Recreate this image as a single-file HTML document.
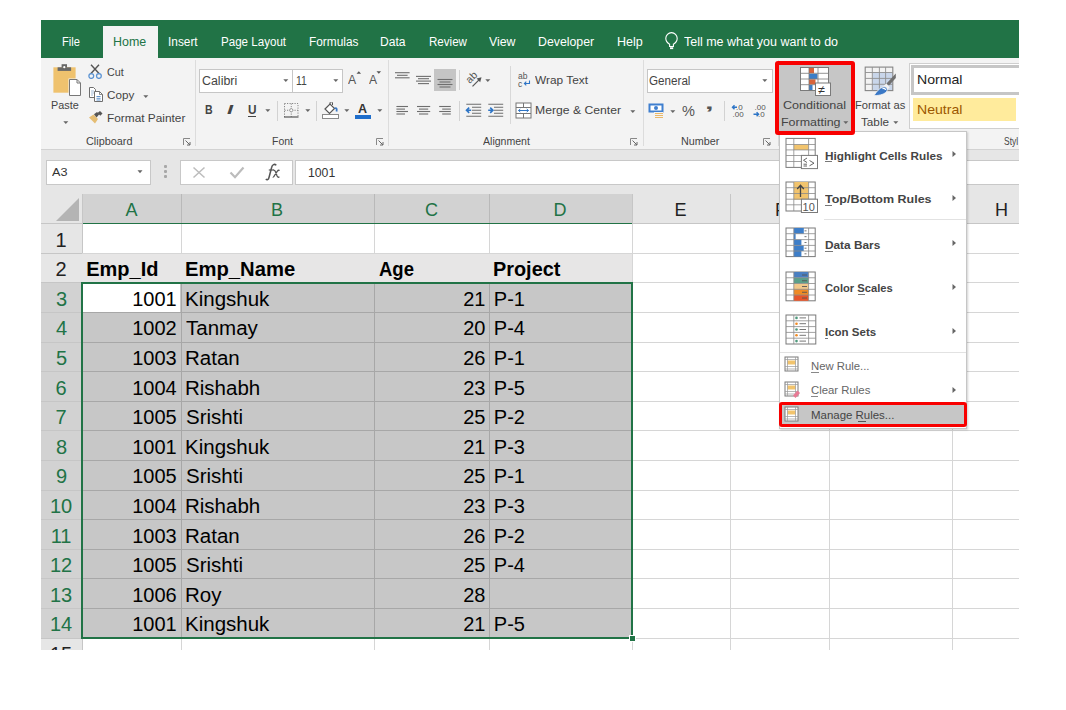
<!DOCTYPE html>
<html><head><meta charset="utf-8"><style>
html,body{margin:0;padding:0;}
body{width:1066px;height:710px;background:#fff;position:relative;overflow:hidden;font-family:"Liberation Sans",sans-serif;}
body>div,body>svg{position:absolute;}
.t{white-space:nowrap;transform-origin:0 0;}
</style></head><body>
<div style="left:41px;top:20px;width:978px;height:38px;background:#217346"></div>
<div style="left:41px;top:58px;width:978px;height:91px;background:#f3f3f3"></div>
<div style="left:41px;top:149px;width:978px;height:1px;background:#d2d2d2"></div>
<div style="left:41px;top:150px;width:978px;height:44px;background:#e6e6e6"></div>
<div style="left:103px;top:26px;width:55px;height:32px;background:#f3f3f3"></div>
<div style="left:82px;top:224px;width:937px;height:426px;background:#fff"></div>
<div style="left:82px;top:194px;width:937px;height:30px;background:#e6e6e6"></div>
<div style="left:41px;top:194px;width:41px;height:456px;background:#e6e6e6"></div>
<div style="left:41px;top:283.3px;width:41px;height:355.2px;background:#d2d2d2"></div>
<div style="left:82px;top:194px;width:550px;height:29px;background:#d2d2d2"></div>
<div style="left:82px;top:223px;width:937px;height:1px;background:#c6c6c6"></div>
<div style="left:82px;top:223px;width:550px;height:1px;background:#217346"></div>
<div style="left:41px;top:223px;width:41px;height:1px;background:#c6c6c6"></div>
<div style="left:181px;top:194px;width:1px;height:29px;background:#b9b9b9"></div>
<div style="left:374px;top:194px;width:1px;height:29px;background:#b9b9b9"></div>
<div style="left:489px;top:194px;width:1px;height:29px;background:#b9b9b9"></div>
<div style="left:632px;top:194px;width:1px;height:29px;background:#c6c6c6"></div>
<div style="left:730px;top:194px;width:1px;height:29px;background:#c6c6c6"></div>
<div style="left:829px;top:194px;width:1px;height:29px;background:#c6c6c6"></div>
<div style="left:952px;top:194px;width:1px;height:29px;background:#c6c6c6"></div>
<div style="left:82px;top:194px;width:1px;height:456px;background:#c6c6c6"></div>
<div style="left:82px;top:252.7px;width:937px;height:1px;background:#d6d6d6"></div>
<div style="left:82px;top:282.3px;width:937px;height:1px;background:#d6d6d6"></div>
<div style="left:82px;top:311.9px;width:937px;height:1px;background:#d6d6d6"></div>
<div style="left:82px;top:341.5px;width:937px;height:1px;background:#d6d6d6"></div>
<div style="left:82px;top:371.1px;width:937px;height:1px;background:#d6d6d6"></div>
<div style="left:82px;top:400.70000000000005px;width:937px;height:1px;background:#d6d6d6"></div>
<div style="left:82px;top:430.3px;width:937px;height:1px;background:#d6d6d6"></div>
<div style="left:82px;top:459.9px;width:937px;height:1px;background:#d6d6d6"></div>
<div style="left:82px;top:489.5px;width:937px;height:1px;background:#d6d6d6"></div>
<div style="left:82px;top:519.1px;width:937px;height:1px;background:#d6d6d6"></div>
<div style="left:82px;top:548.7px;width:937px;height:1px;background:#d6d6d6"></div>
<div style="left:82px;top:578.3000000000001px;width:937px;height:1px;background:#d6d6d6"></div>
<div style="left:82px;top:607.9px;width:937px;height:1px;background:#d6d6d6"></div>
<div style="left:82px;top:637.5px;width:937px;height:1px;background:#d6d6d6"></div>
<div style="left:181px;top:224px;width:1px;height:426px;background:#d6d6d6"></div>
<div style="left:374px;top:224px;width:1px;height:426px;background:#d6d6d6"></div>
<div style="left:489px;top:224px;width:1px;height:426px;background:#d6d6d6"></div>
<div style="left:632px;top:224px;width:1px;height:426px;background:#d6d6d6"></div>
<div style="left:730px;top:224px;width:1px;height:426px;background:#d6d6d6"></div>
<div style="left:829px;top:224px;width:1px;height:426px;background:#d6d6d6"></div>
<div style="left:952px;top:224px;width:1px;height:426px;background:#d6d6d6"></div>
<div style="left:82px;top:253.7px;width:550px;height:29.100000000000023px;background:#e7e6e6"></div>
<div style="left:41px;top:252.7px;width:41px;height:1px;background:#c6c6c6"></div>
<div style="left:41px;top:282.3px;width:41px;height:1px;background:#c6c6c6"></div>
<div style="left:41px;top:311.9px;width:41px;height:1px;background:#c6c6c6"></div>
<div style="left:41px;top:341.5px;width:41px;height:1px;background:#c6c6c6"></div>
<div style="left:41px;top:371.1px;width:41px;height:1px;background:#c6c6c6"></div>
<div style="left:41px;top:400.70000000000005px;width:41px;height:1px;background:#c6c6c6"></div>
<div style="left:41px;top:430.3px;width:41px;height:1px;background:#c6c6c6"></div>
<div style="left:41px;top:459.9px;width:41px;height:1px;background:#c6c6c6"></div>
<div style="left:41px;top:489.5px;width:41px;height:1px;background:#c6c6c6"></div>
<div style="left:41px;top:519.1px;width:41px;height:1px;background:#c6c6c6"></div>
<div style="left:41px;top:548.7px;width:41px;height:1px;background:#c6c6c6"></div>
<div style="left:41px;top:578.3000000000001px;width:41px;height:1px;background:#c6c6c6"></div>
<div style="left:41px;top:607.9px;width:41px;height:1px;background:#c6c6c6"></div>
<div style="left:41px;top:637.5px;width:41px;height:1px;background:#c6c6c6"></div>
<div style="left:82px;top:282.8px;width:550px;height:355.2px;background:rgba(0,0,0,0.22)"></div>
<div style="left:83px;top:283.8px;width:97px;height:28.099999999999966px;background:#fff"></div>
<div style="left:81px;top:281.8px;width:548px;height:353.6px;border:2px solid #217346"></div>
<div style="left:629px;top:634.8px;width:5px;height:5px;background:#217346;border:1px solid #fff"></div>
<svg style="left:55px;top:198px" width="25" height="24"><polygon points="24,0 24,23 1,23" fill="#b4b4b4"/></svg>
<div style="left:46px;top:160px;width:103px;height:23px;background:#fff;border:1px solid #c8c8c8"></div>
<svg style="left:137px;top:170px;" width="6" height="4" viewBox="0 0 6 4"><polygon points="0.5,0.3 5.5,0.3 3,3.3" fill="#666"/></svg>
<div style="left:164px;top:165.3px;width:2.5px;height:2.5px;background:#a8a8a8;border-radius:1px"></div>
<div style="left:164px;top:170.2px;width:2.5px;height:2.5px;background:#a8a8a8;border-radius:1px"></div>
<div style="left:164px;top:175px;width:2.5px;height:2.5px;background:#a8a8a8;border-radius:1px"></div>
<div style="left:180px;top:160px;width:111px;height:23px;background:#fff;border:1px solid #c8c8c8"></div>
<svg style="left:192px;top:166px;" width="14" height="13" viewBox="0 0 14 13"><path d="M1.5,1.5 L12.5,11.5 M12.5,1.5 L1.5,11.5" stroke="#bcbcbc" stroke-width="1.5" fill="none"/></svg>
<svg style="left:229px;top:166px;" width="16" height="13" viewBox="0 0 16 13"><path d="M1.5,6.5 L6,11.2 L14.5,1.5" stroke="#bcbcbc" stroke-width="2.2" fill="none"/></svg>
<svg style="left:264px;top:162px;" width="18" height="20" viewBox="0 0 18 20"><path d="M12.3,3.2 C10.5,1.6 8.3,2.4 7.6,5.5 L5,15.5 C4.4,17.8 3,18.2 1.8,17.2" stroke="#555" stroke-width="1.5" fill="none"/><path d="M4.8,8 H10" stroke="#555" stroke-width="1.2"/><path d="M9.6,8.2 C10.8,8 11.3,9 11.8,10.5 L13,13.8 C13.6,15.3 14.3,15.6 15.4,14.8 M15.6,8.6 C14.8,8 14,8.3 13.2,9.3 L10.5,13.5 C9.8,14.8 9.2,15.3 8.8,15" stroke="#555" stroke-width="1.3" fill="none"/></svg>
<div style="left:295px;top:160px;width:730px;height:23px;background:#fff;border:1px solid #c8c8c8"></div>
<div style="left:195px;top:60px;width:1px;height:86px;background:#dcdcdc"></div>
<div style="left:388px;top:60px;width:1px;height:86px;background:#dcdcdc"></div>
<div style="left:642.5px;top:60px;width:1px;height:86px;background:#dcdcdc"></div>
<svg style="left:183px;top:137.5px;" width="8" height="8" viewBox="0 0 8 8"><path d="M0.5,7 V0.5 H7" stroke="#888" stroke-width="1" fill="none"/><path d="M2.5,2.5 L7,7 M7,4 V7 H4" stroke="#666" stroke-width="1" fill="none"/></svg>
<svg style="left:376px;top:137.5px;" width="8" height="8" viewBox="0 0 8 8"><path d="M0.5,7 V0.5 H7" stroke="#888" stroke-width="1" fill="none"/><path d="M2.5,2.5 L7,7 M7,4 V7 H4" stroke="#666" stroke-width="1" fill="none"/></svg>
<svg style="left:630px;top:137.5px;" width="8" height="8" viewBox="0 0 8 8"><path d="M0.5,7 V0.5 H7" stroke="#888" stroke-width="1" fill="none"/><path d="M2.5,2.5 L7,7 M7,4 V7 H4" stroke="#666" stroke-width="1" fill="none"/></svg>
<svg style="left:763px;top:137.5px;" width="8" height="8" viewBox="0 0 8 8"><path d="M0.5,7 V0.5 H7" stroke="#888" stroke-width="1" fill="none"/><path d="M2.5,2.5 L7,7 M7,4 V7 H4" stroke="#666" stroke-width="1" fill="none"/></svg>
<svg style="left:52px;top:63px;" width="31" height="34" viewBox="0 0 31 34"><rect x="1.4" y="4.3" width="22.2" height="25.4" fill="#efc26e"/>
<rect x="5.6" y="4.3" width="13.5" height="3.6" fill="#686868"/><rect x="9.6" y="1.2" width="5.4" height="3.4" fill="#686868"/>
<circle cx="12.3" cy="4.2" r="1.1" fill="#fff"/>
<path d="M16.5,15.5 H25.5 L30,20 V33.5 H16.5 Z" fill="#f3f3f3"/>
<path d="M17.5,16.5 H25 L28.5,20 V32.5 H17.5 Z" fill="#fff" stroke="#777" stroke-width="1"/>
<path d="M25,16.5 V20 H28.5" fill="none" stroke="#777" stroke-width="1"/></svg>
<svg style="left:62.5px;top:120.5px;" width="6" height="4" viewBox="0 0 6 4"><polygon points="0.3,0.2 5.3,0.2 2.8,3" fill="#666"/></svg>
<svg style="left:88px;top:64px;" width="15" height="15" viewBox="0 0 15 15"><path d="M3,0.8 L11.5,10 M11,0.8 L2.5,10" stroke="#555" stroke-width="1.4" fill="none"/>
<circle cx="3.3" cy="12" r="2.4" fill="none" stroke="#5b93d3" stroke-width="1.3"/><circle cx="10.9" cy="12" r="2.4" fill="none" stroke="#5b93d3" stroke-width="1.3"/></svg>
<svg style="left:88px;top:86px;" width="16" height="17" viewBox="0 0 16 17"><path d="M1.5,1.5 H5.5 L7.5,3.5 V11.5 H1.5 Z" fill="#fff" stroke="#6e6e6e" stroke-width="1"/>
<path d="M3,5 H6 M3,7 H6 M3,9 H5" stroke="#8aa9cc" stroke-width="0.8"/>
<path d="M6.5,5.5 H11.5 L14.5,8.5 V15.5 H6.5 Z" fill="#fff" stroke="#6e6e6e" stroke-width="1"/>
<path d="M11.5,5.5 V8.5 H14.5" fill="none" stroke="#6e6e6e" stroke-width="0.8"/>
<path d="M8.5,10.5 H12.5 M8.5,12.3 H12.5 M8.5,14 H12.5" stroke="#4f88c8" stroke-width="0.9"/></svg>
<svg style="left:143.3px;top:94.5px;" width="6" height="4" viewBox="0 0 6 4"><polygon points="0.3,0.2 5.3,0.2 2.8,3" fill="#666"/></svg>
<svg style="left:88px;top:111px;" width="16" height="14" viewBox="0 0 16 14"><path d="M1,6.5 L5.5,3.5 L10,8 L7,12.5 Z" fill="#e5bd73"/>
<path d="M6,3.2 L9,1 L11.3,3.3 L8.5,6.5 Z" fill="#555"/><path d="M9.5,2 L12,0 L14.5,2.5 L12.3,4.7 Z" fill="#555"/></svg>
<div style="left:198.5px;top:68.5px;width:93px;height:22px;background:#fff;border:1px solid #c6c6c6"></div>
<div style="left:292px;top:68.5px;width:49px;height:22px;background:#fff;border:1px solid #c6c6c6"></div>
<svg style="left:283px;top:79px;" width="6" height="4" viewBox="0 0 6 4"><polygon points="0.3,0.2 5.3,0.2 2.8,3" fill="#666"/></svg>
<svg style="left:332.5px;top:79px;" width="6" height="4" viewBox="0 0 6 4"><polygon points="0.3,0.2 5.3,0.2 2.8,3" fill="#666"/></svg>
<svg style="left:355.5px;top:71px;" width="6" height="3" viewBox="0 0 6 3"><polygon points="0.5,2.8 2.8,0.3 5.1,2.8" fill="#555"/></svg>
<svg style="left:376px;top:71px;" width="6" height="3" viewBox="0 0 6 3"><polygon points="0.5,0.3 5.1,0.3 2.8,2.8" fill="#555"/></svg>
<div style="left:247.5px;top:115.8px;width:8.5px;height:1.3px;background:#444"></div>
<svg style="left:265px;top:109.3px;" width="6" height="4" viewBox="0 0 6 4"><polygon points="0.3,0.2 5.3,0.2 2.8,3" fill="#666"/></svg>
<div style="left:277px;top:100.5px;width:1px;height:20px;background:#d2d2d2"></div>
<svg style="left:284px;top:102.5px;" width="15" height="15" viewBox="0 0 15 15"><path d="M0.5,0.5 H14 V14 M0.5,0.5 V14 M7.25,0.5 V14 M0.5,7.25 H14" stroke="#888" stroke-width="1" stroke-dasharray="1.2,1.3" fill="none"/><circle cx="7.25" cy="7.25" r="1.6" fill="#fff" stroke="#888" stroke-width="0.8"/>
<path d="M0,14 H14.5" stroke="#555" stroke-width="1.2"/></svg>
<svg style="left:304.5px;top:109.3px;" width="6" height="4" viewBox="0 0 6 4"><polygon points="0.3,0.2 5.3,0.2 2.8,3" fill="#666"/></svg>
<div style="left:316px;top:100.5px;width:1px;height:20px;background:#d2d2d2"></div>
<svg style="left:322px;top:102px;" width="18" height="17" viewBox="0 0 18 17"><rect x="0.5" y="12.5" width="16" height="4" fill="#fff" stroke="#8a8a8a" stroke-width="1"/>
<path d="M3,7 L8,2 L12.5,6.5 L7.5,11.5 Z" fill="#fff" stroke="#555" stroke-width="1.2"/>
<path d="M8,2 V0.8 A1.3,1.3 0 0 1 10.5,0.8 V3" fill="none" stroke="#555" stroke-width="1"/>
<path d="M12.5,6.5 Q15.5,5 14.5,9.5" fill="none" stroke="#3a78c4" stroke-width="1.8"/></svg>
<svg style="left:344px;top:109.3px;" width="6" height="4" viewBox="0 0 6 4"><polygon points="0.3,0.2 5.3,0.2 2.8,3" fill="#666"/></svg>
<div style="left:354.8px;top:114.6px;width:16.2px;height:4px;background:#1f6ecb"></div>
<svg style="left:376.5px;top:109.3px;" width="6" height="4" viewBox="0 0 6 4"><polygon points="0.3,0.2 5.3,0.2 2.8,3" fill="#666"/></svg>
<svg style="left:394px;top:70px;" width="26" height="22" viewBox="0 0 26 22"><path d="M1,2.7 H15.6" stroke="#6e6e6e" stroke-width="1.1"/><path d="M3,5.3 H13.6" stroke="#6e6e6e" stroke-width="1.1"/><path d="M1,7.8 H15.6" stroke="#6e6e6e" stroke-width="1.1"/></svg>
<svg style="left:415px;top:72px;" width="26" height="22" viewBox="0 0 26 22"><path d="M1,4.4 H16" stroke="#6e6e6e" stroke-width="1.1"/><path d="M3,6.7 H14" stroke="#6e6e6e" stroke-width="1.1"/><path d="M1,9.1 H16" stroke="#6e6e6e" stroke-width="1.1"/><path d="M3,11.6 H14" stroke="#6e6e6e" stroke-width="1.1"/></svg>
<div style="left:434px;top:69px;width:22px;height:22px;background:#c5c5c5"></div>
<svg style="left:436px;top:72px;" width="26" height="22" viewBox="0 0 26 22"><path d="M1.5,7.5 H16.5" stroke="#6e6e6e" stroke-width="1.1"/><path d="M3.5,10 H14.5" stroke="#6e6e6e" stroke-width="1.1"/><path d="M1.5,12.5 H16.5" stroke="#6e6e6e" stroke-width="1.1"/><path d="M3.5,15 H14.5" stroke="#6e6e6e" stroke-width="1.1"/></svg>
<div style="left:459px;top:70px;width:1px;height:20px;background:#d2d2d2"></div>
<svg style="left:465px;top:71px;" width="18" height="18" viewBox="0 0 18 18"><text x="4.8" y="13" font-family="Liberation Sans" font-size="10.5" fill="#555" transform="rotate(-45 4.8 13)">ab</text>
<path d="M7.5,15.3 L14.5,8.3" stroke="#555" stroke-width="1.2" fill="none"/><polygon points="16.5,6.3 11.6,7.6 15.2,11.2" fill="#555"/></svg>
<svg style="left:485px;top:78.5px;" width="6" height="4" viewBox="0 0 6 4"><polygon points="0.3,0.2 5.3,0.2 2.8,3" fill="#666"/></svg>
<svg style="left:395px;top:104px;" width="26" height="22" viewBox="0 0 26 22"><path d="M1.4,2.5 H13" stroke="#6e6e6e" stroke-width="1.1"/><path d="M1.4,5.1 H10" stroke="#6e6e6e" stroke-width="1.1"/><path d="M1.4,7.5 H13" stroke="#6e6e6e" stroke-width="1.1"/><path d="M1.4,10 H10" stroke="#6e6e6e" stroke-width="1.1"/></svg>
<svg style="left:415px;top:104px;" width="26" height="22" viewBox="0 0 26 22"><path d="M2,2.5 H15.2" stroke="#6e6e6e" stroke-width="1.1"/><path d="M4,5.1 H13.2" stroke="#6e6e6e" stroke-width="1.1"/><path d="M2,7.5 H15.2" stroke="#6e6e6e" stroke-width="1.1"/><path d="M4,10 H13.2" stroke="#6e6e6e" stroke-width="1.1"/></svg>
<svg style="left:437px;top:104px;" width="26" height="22" viewBox="0 0 26 22"><path d="M2.2,2.5 H13.8" stroke="#6e6e6e" stroke-width="1.1"/><path d="M5.2,5.1 H13.8" stroke="#6e6e6e" stroke-width="1.1"/><path d="M2.2,7.5 H13.8" stroke="#6e6e6e" stroke-width="1.1"/><path d="M5.2,10 H13.8" stroke="#6e6e6e" stroke-width="1.1"/></svg>
<div style="left:459px;top:100.5px;width:1px;height:20px;background:#d2d2d2"></div>
<svg style="left:465px;top:103px;" width="18" height="15" viewBox="0 0 18 15"><path d="M1.3,1.2 H16.2 M7,4.2 H16.2 M7,7.2 H16.2 M7,10.2 H16.2 M1.3,13.3 H16.2" stroke="#6e6e6e" stroke-width="1.1"/>
<path d="M1.5,7.2 H6.2 M4.2,4.6 L1.5,7.2 L4.2,9.8" stroke="#2e75c6" stroke-width="1.6" fill="none"/></svg>
<svg style="left:486.5px;top:103px;" width="18" height="15" viewBox="0 0 18 15"><path d="M1.3,1.2 H16.2 M7,4.2 H16.2 M7,7.2 H16.2 M7,10.2 H16.2 M1.3,13.3 H16.2" stroke="#6e6e6e" stroke-width="1.1"/>
<path d="M1.2,7.2 H5.8 M3.2,4.6 L5.9,7.2 L3.2,9.8" stroke="#2e75c6" stroke-width="1.6" fill="none"/></svg>
<div style="left:509.5px;top:66px;width:1px;height:58px;background:#d8d8d8"></div>
<svg style="left:517px;top:71px;" width="14" height="17" viewBox="0 0 14 17"><text x="1" y="8" font-family="Liberation Sans" font-size="8.5" fill="#555">ab</text>
<text x="1" y="15.5" font-family="Liberation Sans" font-size="8.5" fill="#555">c</text>
<path d="M12.5,9.5 V12.5 H7.5 M9.3,10.7 L7.4,12.5 L9.3,14.3" stroke="#2e75c6" stroke-width="1.1" fill="none"/></svg>
<svg style="left:514.5px;top:101.5px;" width="17" height="17" viewBox="0 0 17 17"><rect x="1" y="1" width="15" height="15" fill="#fff" stroke="#777" stroke-width="1"/>
<path d="M1,5.5 H16 M1,11.5 H16 M8.5,1 V5.5 M8.5,11.5 V16" stroke="#777" stroke-width="1"/>
<path d="M3.5,8.5 H13.5 M5.3,7 L3.5,8.5 L5.3,10 M11.7,7 L13.5,8.5 L11.7,10" stroke="#2e75c6" stroke-width="1" fill="none"/></svg>
<svg style="left:629.5px;top:109.8px;" width="6" height="4" viewBox="0 0 6 4"><polygon points="0.3,0.2 5.3,0.2 2.8,3" fill="#666"/></svg>
<div style="left:646.5px;top:68.5px;width:124px;height:22px;background:#fff;border:1px solid #c6c6c6"></div>
<svg style="left:761.5px;top:79px;" width="6" height="4" viewBox="0 0 6 4"><polygon points="0.3,0.2 5.3,0.2 2.8,3" fill="#666"/></svg>
<svg style="left:648px;top:102.5px;" width="17" height="17" viewBox="0 0 17 17"><rect x="0.5" y="0.5" width="15" height="9" fill="#3f7fcf"/><rect x="2.5" y="2.5" width="11" height="5" fill="#fff"/>
<circle cx="8" cy="5" r="2" fill="#3f7fcf"/>
<rect x="6" y="9" width="9" height="7.5" fill="#f3f3f3"/>
<path d="M7,10.5 H15 M7,12.5 H15 M7,14.5 H15" stroke="#e9b86a" stroke-width="1.2"/></svg>
<svg style="left:670px;top:109.6px;" width="6" height="4" viewBox="0 0 6 4"><polygon points="0.3,0.2 5.3,0.2 2.8,3" fill="#666"/></svg>
<div style="left:724px;top:100.5px;width:1px;height:20px;background:#d2d2d2"></div>
<svg style="left:731px;top:103px;" width="16" height="15" viewBox="0 0 16 15"><text x="5" y="7" font-family="Liberation Sans" font-size="8" fill="#555">.0</text><text x="1.5" y="14" font-family="Liberation Sans" font-size="8" fill="#555">.00</text>
<path d="M1.5,4.3 H6 M3.5,2.3 L1.5,4.3 L3.5,6.3" stroke="#2e75c6" stroke-width="1.4" fill="none"/></svg>
<svg style="left:752px;top:103px;" width="16" height="15" viewBox="0 0 16 15"><text x="2.5" y="7" font-family="Liberation Sans" font-size="8" fill="#555">.00</text><text x="6" y="14" font-family="Liberation Sans" font-size="8" fill="#555">.0</text>
<path d="M1.5,11.3 H6.5 M4.6,9.3 L6.6,11.3 L4.6,13.3" stroke="#2e75c6" stroke-width="1.4" fill="none"/></svg>
<div style="left:778px;top:60px;width:1px;height:86px;background:#dcdcdc"></div>
<div style="left:779px;top:65px;width:72px;height:66px;background:#c6c6c6"></div>
<svg style="left:800px;top:67px;" width="32" height="30" viewBox="0 0 32 30"><rect x="0.5" y="0.5" width="28" height="23" fill="#fff" stroke="#7a7a7a" stroke-width="1"/>
<rect x="9" y="1" width="5" height="5.2" fill="#d9643a"/><rect x="9" y="6.8" width="8.5" height="5.2" fill="#3c7ec8"/>
<rect x="9" y="12.3" width="6.5" height="5.2" fill="#d9643a"/><rect x="9" y="18" width="3.5" height="5" fill="#3c7ec8"/>
<path d="M0.5,6.3 H28.5 M0.5,12 H28.5 M0.5,17.7 H28.5 M9,0.5 V23.5 M18,0.5 V23.5" stroke="#7a7a7a" stroke-width="0.8"/>
<rect x="15.5" y="16" width="15" height="12.5" fill="#fff" stroke="#7a7a7a" stroke-width="1"/>
<text x="18.2" y="26.5" font-family="Liberation Sans" font-size="12.5" fill="#333">≠</text></svg>
<svg style="left:843.3px;top:121.2px;" width="6" height="4" viewBox="0 0 6 4"><polygon points="0.3,0.2 5.3,0.2 2.8,3" fill="#666"/></svg>
<svg style="left:864px;top:66px;" width="34" height="32" viewBox="0 0 34 32"><rect x="8.3" y="6.5" width="20.5" height="18.1" fill="#c9d6ea"/>
<rect x="1.2" y="1.1" width="27.6" height="23.5" fill="none" stroke="#858585" stroke-width="1.1"/>
<path d="M1.2,6.5 H28.8 M1.2,12.4 H28.8 M1.2,18.3 H28.8 M8.3,1.1 V24.6 M15.4,1.1 V24.6 M21.6,1.1 V24.6" stroke="#8e8e8e" stroke-width="0.9" fill="none"/>
<path d="M20,23 L24,19.5" stroke="#f3f3f3" stroke-width="5"/>
<path d="M31.8,7.5 L31.8,12 L25,19.5 L22.5,17.5 Z" fill="#707070"/>
<path d="M10,29.6 C12.5,25.5 15.5,22 19,21 C22,20.2 23.8,22.3 23,24.8 C21.5,28 16,29.6 10,29.6 Z" fill="#3a78c6" stroke="#f3f3f3" stroke-width="0.8"/>
<path d="M18.5,22.8 C20,22 21.5,22.6 21.5,24" stroke="#fff" stroke-width="1.2" fill="none"/></svg>
<svg style="left:892.5px;top:121.2px;" width="6" height="4" viewBox="0 0 6 4"><polygon points="0.3,0.2 5.3,0.2 2.8,3" fill="#666"/></svg>
<div style="left:909px;top:63px;width:120px;height:63.5px;background:#fff;border:1px solid #cfcfcf;border-right:none"></div>
<div style="left:910.5px;top:65px;width:110px;height:29.5px;background:#fff;border:3px solid #c6c6c6;box-sizing:border-box;border-right:none"></div>
<div style="left:913px;top:98px;width:103px;height:23px;background:#ffeb9c"></div>
<svg style="left:665px;top:32px;" width="14" height="19" viewBox="0 0 14 19"><path d="M4.6,14.5 V12.2 C1.5,10.5 0.8,8.5 0.8,6.3 A5.7,5.7 0 0 1 12.2,6.3 C12.2,8.5 11.5,10.5 8.4,12.2 V14.5 Z" fill="none" stroke="#fff" stroke-width="1.1"/>
<rect x="5" y="15.3" width="3.2" height="1.8" fill="#fff"/></svg>
<div class="t" style="left:61.70px;top:35.84px;font-size:12px;line-height:12px;color:#fff;transform:scaleX(0.9256);">File</div>
<div class="t" style="left:168.21px;top:35.84px;font-size:12px;line-height:12px;color:#fff;transform:scaleX(0.9873);">Insert</div>
<div class="t" style="left:220.90px;top:35.84px;font-size:12px;line-height:12px;color:#fff;transform:scaleX(0.9654);">Page Layout</div>
<div class="t" style="left:308.60px;top:35.84px;font-size:12px;line-height:12px;color:#fff;transform:scaleX(0.9878);">Formulas</div>
<div class="t" style="left:380.20px;top:35.84px;font-size:12px;line-height:12px;color:#fff;transform:scaleX(1.0049);">Data</div>
<div class="t" style="left:429.00px;top:35.84px;font-size:12px;line-height:12px;color:#fff;transform:scaleX(0.9652);">Review</div>
<div class="t" style="left:489.00px;top:35.84px;font-size:12px;line-height:12px;color:#fff;transform:scaleX(1.0258);">View</div>
<div class="t" style="left:538.10px;top:35.84px;font-size:12px;line-height:12px;color:#fff;transform:scaleX(1.0256);">Developer</div>
<div class="t" style="left:616.60px;top:35.84px;font-size:12px;line-height:12px;color:#fff;transform:scaleX(1.0438);">Help</div>
<div class="t" style="left:683.60px;top:35.84px;font-size:12px;line-height:12px;color:#fff;transform:scaleX(1.0404);">Tell me what you want to do</div>
<div class="t" style="left:113.40px;top:35.84px;font-size:12px;line-height:12px;color:#217346;transform:scaleX(1.0360);">Home</div>
<div class="t" style="left:125.50px;top:201.46px;font-size:18px;line-height:18px;color:#217346;">A</div>
<div class="t" style="left:271.00px;top:201.46px;font-size:18px;line-height:18px;color:#217346;">B</div>
<div class="t" style="left:425.00px;top:201.46px;font-size:18px;line-height:18px;color:#217346;">C</div>
<div class="t" style="left:553.50px;top:201.46px;font-size:18px;line-height:18px;color:#217346;">D</div>
<div class="t" style="left:674.50px;top:201.46px;font-size:18px;line-height:18px;color:#222;">E</div>
<div class="t" style="left:775.00px;top:201.46px;font-size:18px;line-height:18px;color:#222;">F</div>
<div class="t" style="left:884.00px;top:201.46px;font-size:18px;line-height:18px;color:#222;">G</div>
<div class="t" style="left:995.00px;top:201.46px;font-size:18px;line-height:18px;color:#222;">H</div>
<div class="t" style="left:55.50px;top:229.57px;font-size:20px;line-height:20px;color:#222;">1</div>
<div class="t" style="left:55.50px;top:259.17px;font-size:20px;line-height:20px;color:#222;">2</div>
<div class="t" style="left:56.00px;top:288.77px;font-size:20px;line-height:20px;color:#217346;">3</div>
<div class="t" style="left:56.00px;top:318.37px;font-size:20px;line-height:20px;color:#217346;">4</div>
<div class="t" style="left:56.00px;top:347.97px;font-size:20px;line-height:20px;color:#217346;">5</div>
<div class="t" style="left:55.50px;top:377.57px;font-size:20px;line-height:20px;color:#217346;">6</div>
<div class="t" style="left:55.50px;top:407.17px;font-size:20px;line-height:20px;color:#217346;">7</div>
<div class="t" style="left:56.00px;top:436.77px;font-size:20px;line-height:20px;color:#217346;">8</div>
<div class="t" style="left:56.00px;top:466.37px;font-size:20px;line-height:20px;color:#217346;">9</div>
<div class="t" style="left:49.94px;top:495.97px;font-size:20px;line-height:20px;color:#217346;">10</div>
<div class="t" style="left:50.68px;top:525.57px;font-size:20px;line-height:20px;color:#217346;">11</div>
<div class="t" style="left:49.94px;top:555.17px;font-size:20px;line-height:20px;color:#217346;">12</div>
<div class="t" style="left:49.94px;top:584.77px;font-size:20px;line-height:20px;color:#217346;">13</div>
<div class="t" style="left:49.94px;top:614.37px;font-size:20px;line-height:20px;color:#217346;">14</div>
<div class="t" style="left:49.94px;top:643.97px;font-size:20px;line-height:20px;color:#222;">15</div>
<div class="t" style="left:86.20px;top:258.77px;font-size:20px;line-height:20px;color:#000;font-weight:700;">Emp_Id</div>
<div class="t" style="left:184.69px;top:258.77px;font-size:20px;line-height:20px;color:#000;font-weight:700;transform:scaleX(1.0110);">Emp_Name</div>
<div class="t" style="left:378.90px;top:258.77px;font-size:20px;line-height:20px;color:#000;font-weight:700;transform:scaleX(0.9241);">Age</div>
<div class="t" style="left:493.41px;top:258.77px;font-size:20px;line-height:20px;color:#000;font-weight:700;transform:scaleX(0.9934);">Project</div>
<div class="t" style="left:132.23px;top:288.77px;font-size:20px;line-height:20px;color:#000;">1001</div>
<div class="t" style="left:184.67px;top:288.77px;font-size:20px;line-height:20px;color:#000;transform:scaleX(1.0250);">Kingshuk</div>
<div class="t" style="left:463.18px;top:288.77px;font-size:20px;line-height:20px;color:#000;">21</div>
<div class="t" style="left:493.80px;top:288.77px;font-size:20px;line-height:20px;color:#000;">P-1</div>
<div class="t" style="left:132.23px;top:318.37px;font-size:20px;line-height:20px;color:#000;">1002</div>
<div class="t" style="left:185.70px;top:318.37px;font-size:20px;line-height:20px;color:#000;transform:scaleX(1.0250);">Tanmay</div>
<div class="t" style="left:463.18px;top:318.37px;font-size:20px;line-height:20px;color:#000;">20</div>
<div class="t" style="left:493.80px;top:318.37px;font-size:20px;line-height:20px;color:#000;">P-4</div>
<div class="t" style="left:132.23px;top:347.97px;font-size:20px;line-height:20px;color:#000;">1003</div>
<div class="t" style="left:184.67px;top:347.97px;font-size:20px;line-height:20px;color:#000;transform:scaleX(1.0250);">Ratan</div>
<div class="t" style="left:463.18px;top:347.97px;font-size:20px;line-height:20px;color:#000;">26</div>
<div class="t" style="left:493.80px;top:347.97px;font-size:20px;line-height:20px;color:#000;">P-1</div>
<div class="t" style="left:132.23px;top:377.57px;font-size:20px;line-height:20px;color:#000;">1004</div>
<div class="t" style="left:184.67px;top:377.57px;font-size:20px;line-height:20px;color:#000;transform:scaleX(1.0250);">Rishabh</div>
<div class="t" style="left:463.18px;top:377.57px;font-size:20px;line-height:20px;color:#000;">23</div>
<div class="t" style="left:493.80px;top:377.57px;font-size:20px;line-height:20px;color:#000;">P-5</div>
<div class="t" style="left:132.23px;top:407.17px;font-size:20px;line-height:20px;color:#000;">1005</div>
<div class="t" style="left:185.70px;top:407.17px;font-size:20px;line-height:20px;color:#000;transform:scaleX(1.0250);">Srishti</div>
<div class="t" style="left:463.18px;top:407.17px;font-size:20px;line-height:20px;color:#000;">25</div>
<div class="t" style="left:493.80px;top:407.17px;font-size:20px;line-height:20px;color:#000;">P-2</div>
<div class="t" style="left:132.23px;top:436.77px;font-size:20px;line-height:20px;color:#000;">1001</div>
<div class="t" style="left:184.67px;top:436.77px;font-size:20px;line-height:20px;color:#000;transform:scaleX(1.0250);">Kingshuk</div>
<div class="t" style="left:463.18px;top:436.77px;font-size:20px;line-height:20px;color:#000;">21</div>
<div class="t" style="left:493.80px;top:436.77px;font-size:20px;line-height:20px;color:#000;">P-3</div>
<div class="t" style="left:132.23px;top:466.37px;font-size:20px;line-height:20px;color:#000;">1005</div>
<div class="t" style="left:185.70px;top:466.37px;font-size:20px;line-height:20px;color:#000;transform:scaleX(1.0250);">Srishti</div>
<div class="t" style="left:463.18px;top:466.37px;font-size:20px;line-height:20px;color:#000;">25</div>
<div class="t" style="left:493.80px;top:466.37px;font-size:20px;line-height:20px;color:#000;">P-1</div>
<div class="t" style="left:132.23px;top:495.97px;font-size:20px;line-height:20px;color:#000;">1004</div>
<div class="t" style="left:184.67px;top:495.97px;font-size:20px;line-height:20px;color:#000;transform:scaleX(1.0250);">Rishabh</div>
<div class="t" style="left:463.18px;top:495.97px;font-size:20px;line-height:20px;color:#000;">23</div>
<div class="t" style="left:493.80px;top:495.97px;font-size:20px;line-height:20px;color:#000;">P-3</div>
<div class="t" style="left:132.23px;top:525.57px;font-size:20px;line-height:20px;color:#000;">1003</div>
<div class="t" style="left:184.67px;top:525.57px;font-size:20px;line-height:20px;color:#000;transform:scaleX(1.0250);">Ratan</div>
<div class="t" style="left:463.18px;top:525.57px;font-size:20px;line-height:20px;color:#000;">26</div>
<div class="t" style="left:493.80px;top:525.57px;font-size:20px;line-height:20px;color:#000;">P-2</div>
<div class="t" style="left:132.23px;top:555.17px;font-size:20px;line-height:20px;color:#000;">1005</div>
<div class="t" style="left:185.70px;top:555.17px;font-size:20px;line-height:20px;color:#000;transform:scaleX(1.0250);">Srishti</div>
<div class="t" style="left:463.18px;top:555.17px;font-size:20px;line-height:20px;color:#000;">25</div>
<div class="t" style="left:493.80px;top:555.17px;font-size:20px;line-height:20px;color:#000;">P-4</div>
<div class="t" style="left:132.23px;top:584.77px;font-size:20px;line-height:20px;color:#000;">1006</div>
<div class="t" style="left:184.67px;top:584.77px;font-size:20px;line-height:20px;color:#000;transform:scaleX(1.0250);">Roy</div>
<div class="t" style="left:463.18px;top:584.77px;font-size:20px;line-height:20px;color:#000;">28</div>
<div class="t" style="left:132.23px;top:614.37px;font-size:20px;line-height:20px;color:#000;">1001</div>
<div class="t" style="left:184.67px;top:614.37px;font-size:20px;line-height:20px;color:#000;transform:scaleX(1.0250);">Kingshuk</div>
<div class="t" style="left:463.18px;top:614.37px;font-size:20px;line-height:20px;color:#000;">21</div>
<div class="t" style="left:493.80px;top:614.37px;font-size:20px;line-height:20px;color:#000;">P-5</div>
<div class="t" style="left:52.00px;top:166.97px;font-size:11.5px;line-height:11.5px;color:#333;transform:scaleX(1.0973);">A3</div>
<div class="t" style="left:308.00px;top:166.00px;font-size:13px;line-height:13px;color:#333;transform:scaleX(0.9411);">1001</div>
<div class="t" style="left:51.30px;top:100.27px;font-size:11.5px;line-height:11.5px;color:#444;transform:scaleX(0.9410);">Paste</div>
<div class="t" style="left:107.10px;top:66.97px;font-size:11.5px;line-height:11.5px;color:#444;transform:scaleX(0.9358);">Cut</div>
<div class="t" style="left:107.10px;top:89.77px;font-size:11.5px;line-height:11.5px;color:#444;transform:scaleX(1.0149);">Copy</div>
<div class="t" style="left:107.10px;top:112.67px;font-size:11.5px;line-height:11.5px;color:#444;transform:scaleX(1.0299);">Format Painter</div>
<div class="t" style="left:85.80px;top:135.81px;font-size:10.5px;line-height:10.5px;color:#444;transform:scaleX(1.0354);">Clipboard</div>
<div class="t" style="left:201.60px;top:74.64px;font-size:12px;line-height:12px;color:#444;transform:scaleX(1.0347);">Calibri</div>
<div class="t" style="left:295.50px;top:74.54px;font-size:12px;line-height:12px;color:#444;transform:scaleX(0.8683);">11</div>
<div class="t" style="left:348.10px;top:73.62px;font-size:12.5px;line-height:12.5px;color:#555;transform:scaleX(0.9778);">A</div>
<div class="t" style="left:368.80px;top:73.62px;font-size:12.5px;line-height:12.5px;color:#555;transform:scaleX(0.9667);">A</div>
<div class="t" style="left:204.80px;top:104.12px;font-size:12.5px;line-height:12.5px;color:#444;font-weight:700;transform:scaleX(0.8444);">B</div>
<div class="t" style="left:227.40px;top:104.12px;font-size:12.5px;line-height:12.5px;color:#444;font-weight:700;font-style:italic;transform:scaleX(1.7500);">I</div>
<div class="t" style="left:247.50px;top:103.62px;font-size:12.5px;line-height:12.5px;color:#444;font-weight:700;transform:scaleX(0.9444);">U</div>
<div class="t" style="left:357.90px;top:101.67px;font-size:13.5px;line-height:13.5px;color:#333;font-weight:700;transform:scaleX(0.9300);">A</div>
<div class="t" style="left:272.00px;top:135.81px;font-size:10.5px;line-height:10.5px;color:#444;transform:scaleX(0.9956);">Font</div>
<div class="t" style="left:535.00px;top:75.27px;font-size:11.5px;line-height:11.5px;color:#444;transform:scaleX(1.0314);">Wrap Text</div>
<div class="t" style="left:535.00px;top:105.47px;font-size:11.5px;line-height:11.5px;color:#444;transform:scaleX(1.0597);">Merge &amp; Center</div>
<div class="t" style="left:483.00px;top:135.81px;font-size:10.5px;line-height:10.5px;color:#444;transform:scaleX(1.0048);">Alignment</div>
<div class="t" style="left:649.10px;top:74.54px;font-size:12px;line-height:12px;color:#444;transform:scaleX(0.9708);">General</div>
<div class="t" style="left:682.40px;top:103.00px;font-size:15px;line-height:15px;color:#555;transform:scaleX(0.9692);">%</div>
<div class="t" style="left:704.77px;top:96.46px;font-size:16px;line-height:16px;color:#555;font-weight:700;transform:scaleX(1.9333);">,</div>
<div class="t" style="left:680.80px;top:135.91px;font-size:10.5px;line-height:10.5px;color:#444;transform:scaleX(1.0278);">Number</div>
<div class="t" style="left:783.10px;top:100.47px;font-size:11.5px;line-height:11.5px;color:#444;transform:scaleX(1.0950);">Conditional</div>
<div class="t" style="left:780.50px;top:116.87px;font-size:11.5px;line-height:11.5px;color:#444;transform:scaleX(1.0831);">Formatting</div>
<div class="t" style="left:854.70px;top:100.47px;font-size:11.5px;line-height:11.5px;color:#444;transform:scaleX(0.9729);">Format as</div>
<div class="t" style="left:861.30px;top:116.87px;font-size:11.5px;line-height:11.5px;color:#444;transform:scaleX(1.0186);">Table</div>
<div class="t" style="left:916.61px;top:73.40px;font-size:13px;line-height:13px;color:#222;transform:scaleX(1.0852);">Normal</div>
<div class="t" style="left:916.62px;top:103.10px;font-size:13px;line-height:13px;color:#9c5700;transform:scaleX(1.0849);">Neutral</div>
<div class="t" style="left:1003.70px;top:135.71px;font-size:10.5px;line-height:10.5px;color:#444;transform:scaleX(0.8037);">Styl</div>
<div class="t" style="left:824.80px;top:150.57px;font-size:11.5px;line-height:11.5px;color:#444;font-weight:700;transform:scaleX(1.0217);z-index:10;">Highlight Cells Rules</div>
<div class="t" style="left:824.80px;top:194.07px;font-size:11.5px;line-height:11.5px;color:#444;font-weight:700;transform:scaleX(1.0852);z-index:10;">Top/Bottom Rules</div>
<div class="t" style="left:825.00px;top:240.17px;font-size:11.5px;line-height:11.5px;color:#444;font-weight:700;transform:scaleX(1.0282);z-index:10;">Data Bars</div>
<div class="t" style="left:825.00px;top:283.47px;font-size:11.5px;line-height:11.5px;color:#444;font-weight:700;transform:scaleX(0.9730);z-index:10;">Color Scales</div>
<div class="t" style="left:825.00px;top:327.17px;font-size:11.5px;line-height:11.5px;color:#444;font-weight:700;z-index:10;">Icon Sets</div>
<div class="t" style="left:810.70px;top:360.77px;font-size:11.5px;line-height:11.5px;color:#666;transform:scaleX(0.9841);z-index:10;">New Rule...</div>
<div class="t" style="left:810.70px;top:385.47px;font-size:11.5px;line-height:11.5px;color:#666;transform:scaleX(0.9879);z-index:10;">Clear Rules</div>
<div class="t" style="left:810.70px;top:410.07px;font-size:11.5px;line-height:11.5px;color:#444;transform:scaleX(0.9959);z-index:10;">Manage Rules...</div>
<div style="left:0;top:650px;width:1066px;height:60px;background:#fff"></div>
<div style="left:1019px;top:0;width:47px;height:710px;background:#fff"></div>
<div style="left:775px;top:61px;width:72px;height:66px;border:4px solid #f80000;border-radius:3px;z-index:20"></div>
<div style="left:778.5px;top:130.5px;width:188px;height:298px;z-index:5;background:#fff;border:1px solid #c6c6c6;box-sizing:border-box;box-shadow:1px 1px 2px rgba(0,0,0,0.18)"></div>
<svg style="left:785px;top:137px;z-index:6" width="34" height="33" viewBox="0 0 34 33"><rect x="1" y="1.4" width="29.2" height="29" fill="#fff" stroke="#7a7a7a" stroke-width="1"/>
<rect x="8.8" y="7.5" width="14.8" height="5.5" fill="#f2c46d"/>
<path d="M1,7.5 H30.2 M1,12.9 H30.2 M1,18.5 H30.2 M1,24.5 H30.2 M8.8,1.4 V30.4 M23.6,1.4 V30.4" stroke="#8a8a8a" stroke-width="0.8" fill="none"/>
<rect x="16.4" y="18.4" width="16.1" height="13.2" fill="#fff" stroke="#7a7a7a" stroke-width="1"/>
<path d="M22,21 L18.5,23.3 L22,25.5 M18.5,27.2 H22 M18.5,29 H22 M24.5,23.5 L29,26.2 L24.5,28.8" stroke="#555" stroke-width="0.9" fill="none"/></svg>
<div style="left:824.8px;top:161.3px;width:7.5px;height:1px;z-index:5;background:#777;z-index:10"></div>
<svg style="left:785px;top:181px;z-index:6" width="34" height="33" viewBox="0 0 34 33"><rect x="1" y="1" width="29.2" height="29" fill="#fff" stroke="#7a7a7a" stroke-width="1"/>
<rect x="8.8" y="1" width="14.8" height="17.7" fill="#f2c46d"/>
<path d="M1,6.7 H30.2 M1,12.5 H30.2 M1,18.2 H30.2 M1,23.8 H30.2 M8.8,1 V30 M23.6,1 V30" stroke="#8a8a8a" stroke-width="0.8" fill="none"/>
<path d="M15.5,16 V4.5 M12.2,8 L15.5,4.3 L18.8,8" stroke="#444" stroke-width="1.3" fill="none"/>
<rect x="16.4" y="18.2" width="16.1" height="13.3" fill="#fff" stroke="#7a7a7a" stroke-width="1"/>
<text x="17.6" y="29.5" font-family="Liberation Sans" font-size="11" fill="#555">10</text></svg>
<div style="left:824.8px;top:204.8px;width:7px;height:1px;z-index:5;background:#777;z-index:10"></div>
<div style="left:824px;top:218.5px;width:142px;height:1px;z-index:5;background:#e2e2e2"></div>
<svg style="left:785px;top:227px;z-index:6" width="34" height="31" viewBox="0 0 34 31"><rect x="1" y="1" width="29.2" height="28.6" fill="#fff" stroke="#7a7a7a" stroke-width="1"/><rect x="8.8" y="1" width="10" height="5.7" fill="#3d7ec9"/><path d="M19.5,3.85 H21.5" stroke="#666" stroke-width="0.9"/><rect x="8.8" y="6.7" width="1.8" height="5.9" fill="#3d7ec9"/><path d="M19.5,9.65 H21.5" stroke="#666" stroke-width="0.9"/><rect x="8.8" y="12.6" width="7.6" height="5.8" fill="#3d7ec9"/><path d="M19.5,15.5 H21.5" stroke="#666" stroke-width="0.9"/><rect x="8.8" y="18.4" width="9.9" height="5.6" fill="#3d7ec9"/><path d="M19.5,21.2 H21.5" stroke="#666" stroke-width="0.9"/><rect x="8.8" y="24" width="7.6" height="5.6" fill="#3d7ec9"/><path d="M19.5,26.8 H21.5" stroke="#666" stroke-width="0.9"/>
<path d="M1,6.7 H30.2 M1,12.6 H30.2 M1,18.4 H30.2 M1,24 H30.2 M8.8,1 V29.6 M23.6,1 V29.6" stroke="#8a8a8a" stroke-width="0.8" fill="none"/></svg>
<div style="left:825px;top:250.9px;width:8px;height:1px;z-index:5;background:#777;z-index:10"></div>
<svg style="left:785px;top:271px;z-index:6" width="34" height="31" viewBox="0 0 34 31"><rect x="1" y="1" width="29.2" height="28.8" fill="#fff" stroke="#7a7a7a" stroke-width="1"/><rect x="8.8" y="1.00" width="14.8" height="5.76" fill="#4a7fc1"/><path d="M17,4.00 H22" stroke="#555" stroke-width="0.9"/><rect x="8.8" y="6.76" width="14.8" height="5.76" fill="#5ba08a"/><path d="M17,9.76 H22" stroke="#555" stroke-width="0.9"/><rect x="8.8" y="12.52" width="14.8" height="5.76" fill="#f2c98a"/><path d="M17,15.52 H22" stroke="#555" stroke-width="0.9"/><rect x="8.8" y="18.28" width="14.8" height="5.76" fill="#f08a24"/><path d="M17,21.28 H22" stroke="#555" stroke-width="0.9"/><rect x="8.8" y="24.04" width="14.8" height="5.76" fill="#e8552a"/><path d="M17,27.04 H22" stroke="#555" stroke-width="0.9"/>
<path d="M1,6.76 H30.2 M1,12.5 H30.2 M1,18.3 H30.2 M1,24 H30.2 M8.8,1 V29.8 M23.6,1 V29.8" stroke="#8a8a8a" stroke-width="0.8" fill="none"/></svg>
<div style="left:858.4px;top:294.2px;width:6.2px;height:1px;z-index:5;background:#777;z-index:10"></div>
<svg style="left:785px;top:314px;z-index:6" width="34" height="31" viewBox="0 0 34 31"><rect x="1" y="1" width="29.8" height="29" fill="#fff" stroke="#7a7a7a" stroke-width="1"/>
<path d="M1,6.8 H30.8 M1,12.6 H30.8 M1,18.4 H30.8 M1,24.2 H30.8 M8.8,1 V30 M23.6,1 V30" stroke="#8a8a8a" stroke-width="0.8" fill="none"/><circle cx="11.5" cy="3.90" r="1.3" fill="#4f9a7d"/><path d="M14.5,3.90 H21" stroke="#666" stroke-width="0.9"/><circle cx="11.5" cy="9.70" r="1.3" fill="#f08a24"/><path d="M14.5,9.70 H21" stroke="#666" stroke-width="0.9"/><circle cx="11.5" cy="15.50" r="1.3" fill="#4f9a7d"/><path d="M14.5,15.50 H21" stroke="#666" stroke-width="0.9"/><circle cx="11.5" cy="21.30" r="1.3" fill="#f08a24"/><path d="M14.5,21.30 H21" stroke="#666" stroke-width="0.9"/><circle cx="11.5" cy="27.10" r="1.3" fill="#4f9a7d"/><path d="M14.5,27.10 H21" stroke="#666" stroke-width="0.9"/></svg>
<div style="left:825px;top:337.9px;width:3px;height:1px;z-index:5;background:#777;z-index:10"></div>
<div style="left:779.5px;top:352px;width:186px;height:1px;z-index:5;background:#e2e2e2"></div>
<svg style="left:951.5px;top:150.9px;z-index:6" width="5" height="6" viewBox="0 0 5 6"><polygon points="0.5,0 4,3 0.5,6" fill="#666"/></svg>
<svg style="left:951.5px;top:194.8px;z-index:6" width="5" height="6" viewBox="0 0 5 6"><polygon points="0.5,0 4,3 0.5,6" fill="#666"/></svg>
<svg style="left:951.5px;top:240.3px;z-index:6" width="5" height="6" viewBox="0 0 5 6"><polygon points="0.5,0 4,3 0.5,6" fill="#666"/></svg>
<svg style="left:951.5px;top:284.1px;z-index:6" width="5" height="6" viewBox="0 0 5 6"><polygon points="0.5,0 4,3 0.5,6" fill="#666"/></svg>
<svg style="left:951.5px;top:327.8px;z-index:6" width="5" height="6" viewBox="0 0 5 6"><polygon points="0.5,0 4,3 0.5,6" fill="#666"/></svg>
<svg style="left:951.5px;top:387.2px;z-index:6" width="5" height="6" viewBox="0 0 5 6"><polygon points="0.5,0 4,3 0.5,6" fill="#666"/></svg>
<svg style="left:783.5px;top:356px;z-index:6" width="16" height="17" viewBox="0 0 16 17"><rect x="1" y="1" width="13" height="14" fill="#fff" stroke="#7a7a7a" stroke-width="1"/>
<rect x="3.5" y="4.5" width="8" height="4" fill="#f2c46d"/>
<path d="M1,3.5 H14 M1,10.5 H14 M1,13 H14 M3.5,1 V15 M11.5,1 V15" stroke="#9a9a9a" stroke-width="0.7" fill="none"/></svg>
<div style="left:810.7px;top:371.5px;width:8.5px;height:1px;z-index:5;background:#888;z-index:10"></div>
<svg style="left:783.5px;top:381px;z-index:6" width="16" height="17" viewBox="0 0 16 17"><rect x="1" y="1" width="13" height="14" fill="#fff" stroke="#7a7a7a" stroke-width="1"/>
<rect x="3.5" y="4.5" width="8" height="4" fill="#f2c46d"/>
<path d="M1,3.5 H14 M1,10.5 H14 M1,13 H14 M3.5,1 V15 M11.5,1 V15" stroke="#9a9a9a" stroke-width="0.7" fill="none"/><path d="M9,14.5 L13.5,9.5 L16,12 L11.5,17 Z" fill="#e87a95"/></svg>
<div style="left:810.7px;top:396.2px;width:7px;height:1px;z-index:5;background:#888;z-index:10"></div>
<div style="left:782px;top:405px;width:182px;height:19px;z-index:5;background:#c6c6c6"></div>
<svg style="left:783.5px;top:405.5px;z-index:6" width="16" height="17" viewBox="0 0 16 17"><rect x="1" y="1" width="13" height="14" fill="#fff" stroke="#7a7a7a" stroke-width="1"/>
<rect x="3.5" y="4.5" width="8" height="4" fill="#f2c46d"/>
<path d="M1,3.5 H14 M1,10.5 H14 M1,13 H14 M3.5,1 V15 M11.5,1 V15" stroke="#9a9a9a" stroke-width="0.7" fill="none"/></svg>
<div style="left:858.3px;top:420.8px;width:7.5px;height:1px;z-index:5;background:#555;z-index:10"></div>
<div style="left:779px;top:402px;width:188px;height:25px;z-index:5;border:3.5px solid #f80000;border-radius:3px;box-sizing:border-box;z-index:8"></div>
</body></html>
